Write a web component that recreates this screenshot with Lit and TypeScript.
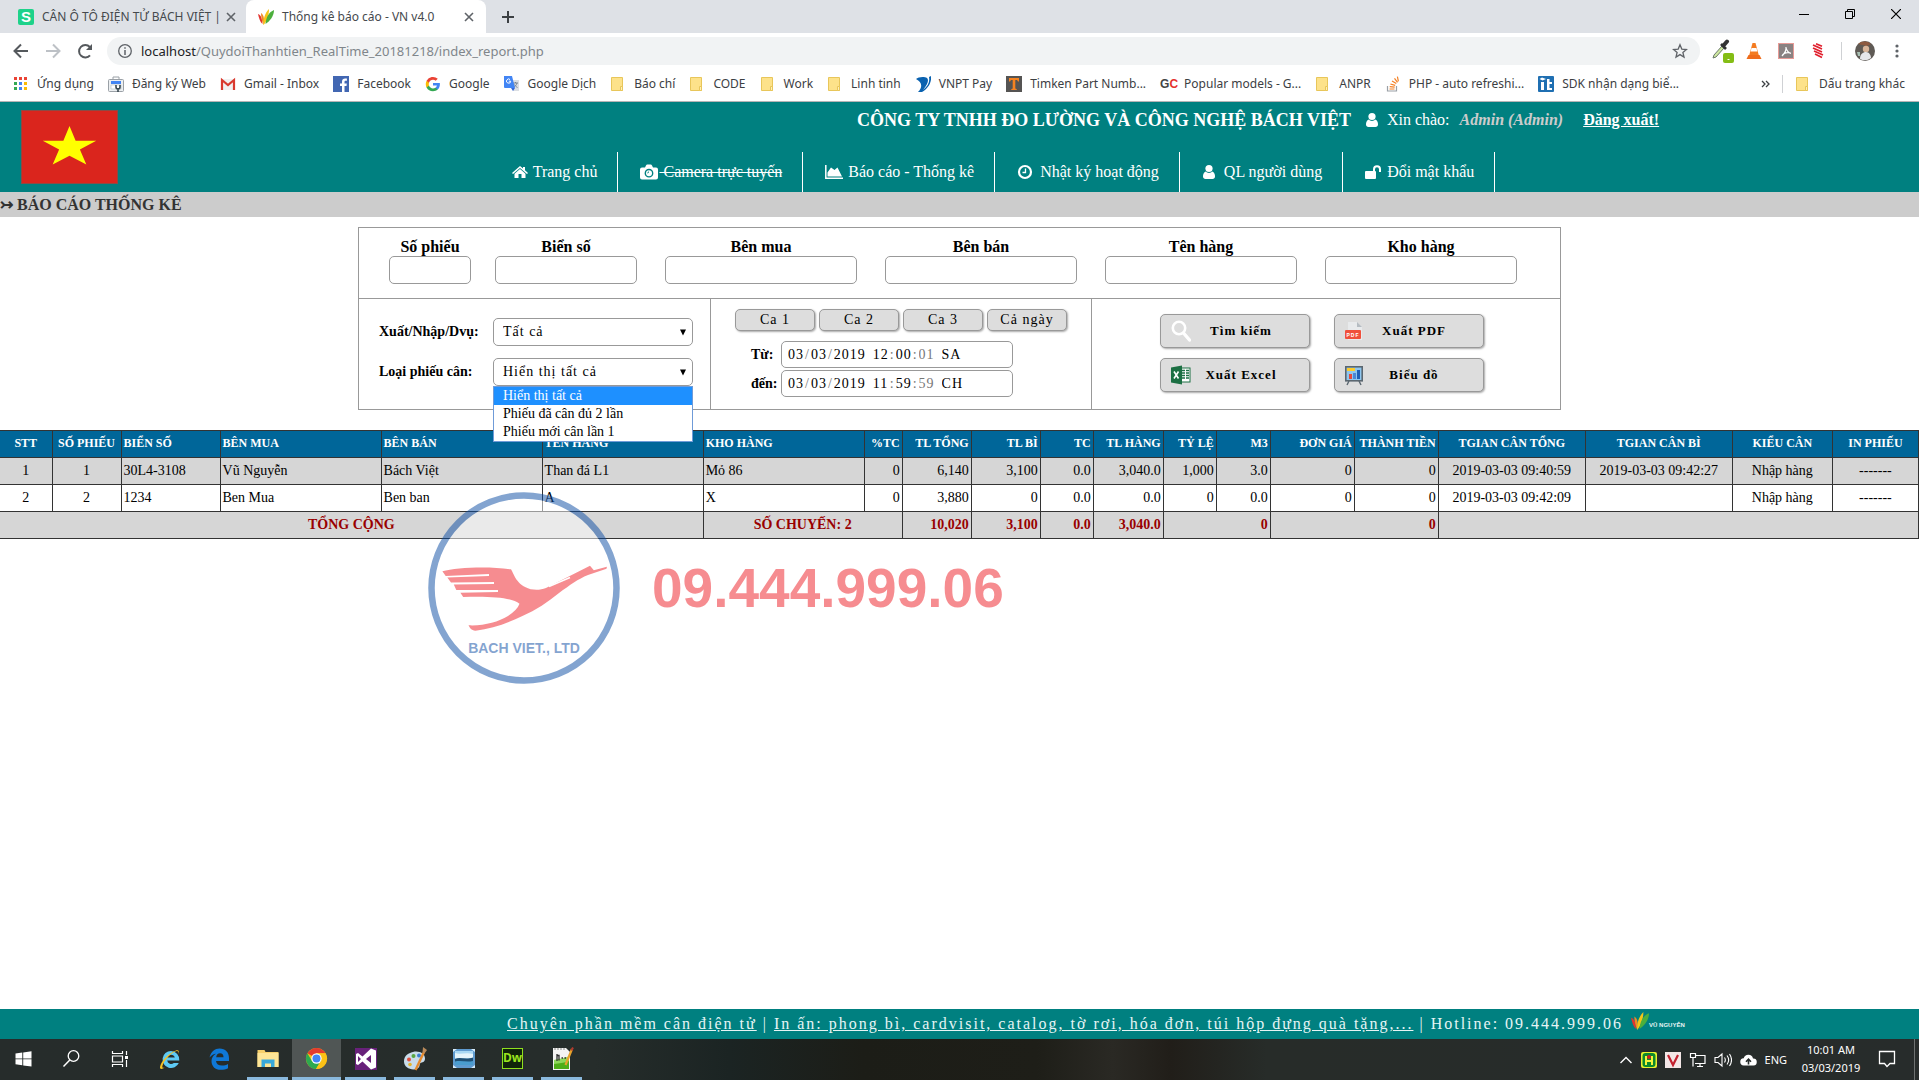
import { LitElement, html, css, svg, nothing } from "lit";
import { customElement, state } from "lit/decorators.js";
import { classMap } from "lit/directives/class-map.js";

const icon = (w: number, h: number, body: unknown, box = `0 0 ${w} ${h}`) =>
  html`<svg class="ic" width=${w} height=${h} viewBox=${box} aria-hidden="true">${body}</svg>`;

/* ---------- browser icons ---------- */
const folder = () => icon(16, 16, svg`<path d="M1.500 1.500h11v13h-11z" fill="#fde28a" stroke="#e8c65a"/><path d="M10.500 10.500h2v4h-2z" fill="#fff0b8" stroke="#e8c65a"/>`);
const brand = (s = 16) => icon(s, s, svg`
  <path d="M0 5c3 1 4 4 4.500 10C2 13 1 9 0 5z" fill="#e3342f"/>
  <path d="M3 4c3 2 3.500 6 2.500 12C4 12 3 8 3 4z" fill="#f08a24"/>
  <path d="M11 0c0 6-2 12-5.500 16C5 10 7 4 11 0z" fill="#f5c518"/>
  <path d="M16 1c0 6-4 11-8.500 14C8 8 11 3 16 1z" fill="#4caf3d"/>`, "0 0 16 16");

const googleG = svg`
  <path d="M14.900 8.200c0-.5 0-.9-.1-1.300H8v2.600h3.900a3.300 3.300 0 0 1-1.400 2.200v1.800h2.300c1.300-1.300 2.100-3.100 2.100-5.300z" fill="#4285f4"/>
  <path d="M8 15.200c1.900 0 3.500-.6 4.700-1.700l-2.300-1.800c-.6.4-1.400.7-2.400.7-1.900 0-3.400-1.200-4-2.900H1.600v1.900A7.200 7.200 0 0 0 8 15.200z" fill="#34a853"/>
  <path d="M4 9.500a4.300 4.300 0 0 1 0-2.800V4.800H1.600a7.200 7.200 0 0 0 0 6.600z" fill="#fbbc05"/>
  <path d="M8 3.700c1 0 2 .4 2.700 1.100l2.100-2A7.200 7.200 0 0 0 1.600 4.800L4 6.700c.6-1.700 2.100-3 4-3z" fill="#ea4335"/>`;

const appsIcon = () => icon(16, 16, svg`${[0, 1, 2].map((r) => [0, 1, 2].map((c) => svg`
  <rect x=${1 + c * 5} y=${1 + r * 5} width="3" height="3" fill=${[["#ea4335", "#ea4335", "#ea4335"], ["#34a853", "#4285f4", "#fbbc05"], ["#34a853", "#4285f4", "#fbbc05"]][r][c]}/>`))}`);

const bookmarks: { label: string; glyph: () => unknown }[] = [
  { label: "Ứng dụng", glyph: appsIcon },
  { label: "Đăng ký Web", glyph: () => icon(16, 16, svg`<path d="M5 3V1h6v2" fill="none" stroke="#9aa0a6"/><rect x=".5" y="3.500" width="15" height="12" rx="1" fill="#eceff1" stroke="#9aa0a6"/><path d="M3 5h10v3H3z" fill="#4285f4"/><path d="M3 9h10v4H3z" fill="#fff" stroke="#b0bec5" stroke-width=".6"/><path d="M8 9v2a2 2 0 0 0 4 0V9M10 12v4" fill="none" stroke="#37474f" stroke-width="1.600"/>`) },
  { label: "Gmail - Inbox", glyph: () => icon(16, 16, svg`<path d="M1 3h14v11H1z" fill="#f1f1f1"/><path d="M2 14V4l6 5 6-5v10" fill="none" stroke="#d93a2f" stroke-width="2.200"/>`) },
  { label: "Facebook", glyph: () => icon(16, 16, svg`<rect width="16" height="16" fill="#4267b2"/><path d="M11.500 16v-6h2l.3-2.500h-2.300V6c0-.8.3-1.200 1.300-1.200h1.100V2.600C13.600 2.500 13 2.500 12.200 2.500c-2 0-3.200 1.200-3.200 3.200v1.800H7V10h2v6z" fill="#fff"/>`) },
  { label: "Google", glyph: () => icon(16, 16, googleG) },
  { label: "Google Dịch", glyph: () => icon(16, 16, svg`<path d="M6 4h9v11H9z" fill="#dcdfe3"/><path d="M9 7h5M11.500 6v1M13 7c-.5 2-2 3.500-3.500 4.500M10.500 8.500c.5 1.200 1.700 2.300 3 3" stroke="#6f7d8c" fill="none" stroke-width=".9"/><path d="M0 0h8l3 12H1a1 1 0 0 1-1-1z" fill="#4285f4"/><path d="M6.800 5.200H4.800M6.700 5.300A2.100 2.100 0 1 1 6 3.500" stroke="#fff" fill="none"/><path d="M7 12h4l-2 3z" fill="#3367d6"/>`) },
  { label: "Báo chí", glyph: folder },
  { label: "CODE", glyph: folder },
  { label: "Work", glyph: folder },
  { label: "Linh tinh", glyph: folder },
  { label: "VNPT Pay", glyph: () => icon(16, 16, svg`<path d="M1 3c2-2 8-3 11-1 2 2 1 6-4 12 5-4 7-8 6-13l2-1c1 6-3 13-9 16H3C8 11 7 6 1 3z" fill="#0a62b0"/>`) },
  { label: "Timken Part Numb...", glyph: () => icon(16, 16, svg`<rect width="16" height="16" fill="#555453"/><path d="M3 2h10v3.500h-1L11 4H9.300v8.500l1.500.7V14H5.200v-.8l1.500-.7V4H5L4 5.500H3z" fill="#f58220"/>`) },
  { label: "Popular models - G...", glyph: () => html`<span class="gc">G<b>C</b></span>` },
  { label: "ANPR", glyph: folder },
  { label: "PHP - auto refreshi...", glyph: () => icon(16, 16, svg`<path d="M2.500 10v5h9v-5" fill="none" stroke="#9aa0a6" stroke-width="1.200"/><path d="M4.500 13h5M4.700 10.700l5 .5M5.400 8l4.800 1.400M7 5l4.300 2.600M9.500 2.300l3 4M12.400.6l1 4.800" stroke="#f48024" stroke-width="1.200"/>`) },
  { label: "SDK nhận dạng biể...", glyph: () => icon(16, 16, svg`<rect width="16" height="16" rx="1" fill="#1f6fb2"/><path d="M3 6h3v8H3zM9 3h2.500v3H14v2h-2.500v4H14v2H9z" fill="#fff"/><path d="M1.500 3L4 1.500 8 3 4.500 4.500z" fill="#fff"/>`) },
];

/* ---------- site icons ---------- */
const home = () => icon(16, 16, svg`<path d="M8 2L0 9l1 1 7-6 7 6 1-1-3-2.700V3h-2v1.600z" fill="#fff"/><path d="M8 5L2.500 9.700V14h4v-4h3v4h4V9.700z" fill="#fff"/>`);
const camera = () => icon(18, 16, svg`<path fill-rule="evenodd" d="M2 3.500h3L6 1.500C6.300.800 6.700.500 7.300.500h3.400c.6 0 1 .3 1.300 1l1 2h3a2 2 0 0 1 2 2v8a2 2 0 0 1-2 2H2a2 2 0 0 1-2-2v-8a2 2 0 0 1 2-2zm7 1.300a4.400 4.400 0 1 0 0 8.800 4.400 4.400 0 0 0 0-8.800z" fill="#fff"/><circle cx="9" cy="9.200" r="3" fill="#fff"/><path d="M7.700 9.300A1.400 1.400 0 0 1 9 7.900" stroke="#008080" fill="none"/>`);
const area = () => icon(18, 16, svg`<path d="M.8 1v13.300H18" fill="none" stroke="#fff" stroke-width="1.500"/><path d="M2.500 12.500V8.500l3.500-5L9.500 6l3-2.500L17 12.500z" fill="#fff"/>`);
const clock = () => icon(18, 16, svg`<circle cx="8" cy="8" r="6" fill="none" stroke="#fff" stroke-width="2.200"/><path d="M8.500 4.500v4H5.500" fill="none" stroke="#fff" stroke-width="1.300"/>`);
const person = (w = 14) => icon(w, 16, svg`<circle cx="7" cy="4.500" r="3.600" fill="#fff"/><path d="M3.500 7.500C1.500 8.500 1 10.500 1 12.500 1 14 2 15 3.500 15h7c1.500 0 2.500-1 2.500-2.500 0-2-.5-4-2.500-5a5 5 0 0 1-7 0z" fill="#fff"/>`);
const unlock = () => icon(17, 16, svg`<path d="M9 8V5.300a3 3 0 0 1 6 0V8" fill="none" stroke="#fff" stroke-width="2"/><rect x="0" y="7" width="11" height="8" rx="1" fill="#fff"/>`);

const navItems = [
  { label: "Trang chủ", glyph: home },
  { label: "Camera trực tuyến", glyph: camera, off: true },
  { label: "Báo cáo - Thống kê", glyph: area },
  { label: "Nhật ký hoạt động", glyph: clock },
  { label: "QL người dùng", glyph: () => person(17) },
  { label: "Đổi mật khẩu", glyph: unlock },
];

const searchIcon = () => icon(20, 22, svg`<circle cx="8" cy="8" r="6.200" fill="none" stroke="#fff" stroke-width="2.600"/><path d="M12.500 13l6 7" stroke="#fff" stroke-width="3.400" stroke-linecap="round"/>`);
const pdfIcon = () => icon(18, 22, svg`<path d="M3 2h9l5 5v13H3z" fill="#e8eaec"/><path d="M12 2l5 5h-5z" fill="#b5bcc2"/><rect x="0" y="10" width="16" height="9" rx="1" fill="#f0503c"/><text x="8" y="17" text-anchor="middle" class="tiny">PDF</text>`);
const excelIcon = () => icon(20, 22, svg`<rect x="9" y="4" width="10" height="14" fill="#fff" stroke="#1d7044"/><path d="M11 6.500h3M15 6.500h3M11 9h3M15 9h3M11 11.500h3M15 11.500h3M11 14h3M15 14h3" stroke="#1d7044" stroke-width="1.400"/><path d="M0 3.500L11 1.500v19L0 18.500z" fill="#1d7044"/><path d="M3 7.500l4.500 7M7.500 7.500L3 14.500" stroke="#fff" stroke-width="1.600"/>`);
const chartIcon = () => icon(18, 22, svg`<path d="M4 17l-2 4M14 17l2 4" stroke="#5b6770" stroke-width="1.400"/><rect x=".8" y="2.800" width="16.400" height="14" fill="#8fc7ef" stroke="#5b6770" stroke-width="1.600"/><path d="M2 4h8v3H2z" fill="#fccc2e"/><path d="M4 10h3v5H4z" fill="#e5493a"/><path d="M8 9h3v6H8z" fill="#4b87d6"/><path d="M12 6h3v9h-3z" fill="#1f5fb5"/>`);

/* ---------- taskbar icons ---------- */
const taskIcons: { name: string; glyph: () => unknown; slim?: boolean; open?: boolean; active?: boolean }[] = [
  { name: "Start", slim: true, glyph: () => icon(24, 24, svg`<path d="M3.500 6.500L10.300 5.500v6H3.500zM11.200 5.400L19.500 4.200v7.300h-8.300zM3.500 12.300h6.800v6L3.500 17.300zM11.200 12.300H19.500v7.300l-8.300-1.200z" fill="#fff"/>`) },
  { name: "Search", slim: true, glyph: () => icon(24, 24, svg`<circle cx="13.500" cy="9" r="5.300" fill="none" stroke="#fff" stroke-width="1.300"/><path d="M9.800 13L3.500 19.500" stroke="#fff" stroke-width="1.500"/>`) },
  { name: "Task view", glyph: () => icon(24, 24, svg`<path d="M3.500 4v2.500h10V4M3.500 20v-2.500h10V20M3.500 9h10v6h-10zM17.500 4v4M17.500 13v7" fill="none" stroke="#fff" stroke-width="1.200"/><path d="M16 9h3v3h-3z" fill="#fff"/>`) },
  { name: "Internet Explorer", glyph: () => icon(24, 24, svg`<path fill-rule="evenodd" d="M13 4a8.500 8.500 0 1 0 7.800 12h-5a4 4 0 0 1-6.600-2.500H21.300A8.600 8.600 0 0 0 13 4zm-3.700 6.500a3.900 3.900 0 0 1 7.500 0z" fill="#5ecbf5"/><path d="M20.500 7c1-3 0-4.500-3-3.300C11 6 3 14 2 20c-.3 2.500 2 2.500 5 .5-2 .7-3 .3-2.600-1.500C5.500 14 13 5.500 18 4.200c2-.5 2.800.5 2.500 2.800z" fill="#f7c325"/>`) },
  { name: "Edge", glyph: () => icon(22, 24, svg`<path d="M2.500 10.500C4 4.500 8 1.500 12.500 1.500c6 0 9.500 4 9.500 9.500v3H9c.3 3 2.500 4.500 6 4.500 2.300 0 4.300-.6 6-1.600v4.300c-2 1-4.500 1.600-7 1.600-6 0-9.500-3.500-9.500-8.800 0-3.300 1.800-6 4.500-7.300C7 6.800 4.500 8 2.500 10.500zM9.200 10.200h7.300c0-2.500-1.200-3.900-3.500-3.900-2.200 0-3.500 1.500-3.800 3.900z" fill="#0f78d7" fill-rule="evenodd"/>`, "1 0 22 24") },
  { name: "File Explorer", open: true, glyph: () => icon(24, 24, svg`<path d="M1.500 3h7l1 2h13v15h-21z" fill="#f5cf6b"/><path d="M1.500 6h21v14h-21z" fill="#fde596"/><path d="M5.500 20v-7.500h13V20h-3.500v-3.500h-6V20z" fill="#39a9db"/>`) },
  { name: "Chrome", open: true, active: true, glyph: () => icon(23, 23, svg`<circle cx="12" cy="12" r="11" fill="#fbc116"/><path d="M12 12L2.500 6.500A11 11 0 0 1 21.500 6.500H12z" fill="#e33b2e"/><path d="M2.500 6.500A11 11 0 0 0 11.500 23l5-8.500L12 12 7.500 15z" fill="#2da94f"/><path d="M12 6.500h9.500a11 11 0 0 1-10 16.500l5-8.500z" fill="#fbc116"/><circle cx="12" cy="12" r="5.400" fill="#fff"/><circle cx="12" cy="12" r="4.200" fill="#4285f4"/>`, "0 0 24 24") },
  { name: "Visual Studio", open: true, glyph: () => icon(22, 22, svg`<path d="M1 1h22v22H1z" fill="#68217a"/><path d="M17 1.500l5 2v17l-5 2-8.500-8L4 18l-2-1V7l2-1 4.500 3.500zM17 8l-5 4 5 4zM4 9v6l3-3z" fill="#fff" fill-rule="evenodd"/>`, "1 1 22 22") },
  { name: "Paint", open: true, glyph: () => icon(24, 24, svg`<path d="M10 5c6-1.500 12 1.500 12 6.500 0 4-3 3.500-4.500 4.500s0 4-3 5.500C9 24 1 21 1 14.500 1 9 5 6 10 5z" fill="#c9dcea"/><circle cx="6" cy="12.500" r="2" fill="#e0503f"/><circle cx="10.500" cy="9" r="2" fill="#58a742"/><circle cx="16" cy="8.500" r="2" fill="#3c7fd0"/><circle cx="7" cy="17.500" r="1.800" fill="#e5b52c"/><path d="M12.500 23L21 5" stroke="#e58a2d" stroke-width="2.400"/><path d="M19.500 5.500L20 0l4 3-2.500 3.500z" fill="#b98a5a"/>`) },
  { name: "Photos", open: true, glyph: () => icon(24, 24, svg`<path d="M1 2h22v19H1z" fill="#5f9bd0"/><path d="M3 4h18v14H3z" fill="#a9d8f3"/><path d="M3 6c5 2 11-1 18 1v4H3z" fill="#e4f4fb"/><path d="M3 12c5-2.500 10 1 18-1.500V18H3z" fill="#1f4f73"/><path d="M3 14.500c6-1.500 11 1 18-.5v4H3z" fill="#4a9dcf"/><path d="M1 18l4 3H1zM23 18l-4 3h4zM1 5l4-3H1zM23 5l-4-3h4z" fill="#d7ecfa"/>`) },
  { name: "Dreamweaver", open: true, glyph: () => html`<span class="dw">Dw</span>` },
  { name: "Notepad++", open: true, glyph: () => icon(24, 24, svg`<path d="M3 1h13l4 4v18H3z" fill="#f4f4f2"/><path d="M4 13c5-2 10-1 15-4v13H4z" fill="#8fd85a"/><path d="M4 17c5-1 10-1 15-3v8H4z" fill="#4fae18"/><path d="M5 1v2M8 1v2M11 1v2M14 1v2" stroke="#8b8b8b"/><path d="M7 7v7M7 8.500h2v5M11.500 11h1.500M14.500 11h1.500" stroke="#2d2d2d" stroke-width="1.300" fill="none"/><path d="M15.500 18L22 2" stroke="#e8a22b" stroke-width="2.200"/><path d="M21.500 3.500L23 .5" stroke="#b23a2e" stroke-width="2"/>`) },
];

/* ---------- report data ---------- */
const columns: { label: string; w: number; align: "l" | "c" | "r" }[] = [
  { label: "STT", w: 52, align: "c" },
  { label: "SỐ PHIẾU", w: 69, align: "c" },
  { label: "BIỂN SỐ", w: 99, align: "l" },
  { label: "BÊN MUA", w: 161, align: "l" },
  { label: "BÊN BÁN", w: 161, align: "l" },
  { label: "TÊN HÀNG", w: 161, align: "l" },
  { label: "KHO HÀNG", w: 161, align: "l" },
  { label: "%TC", w: 38, align: "r" },
  { label: "TL TỔNG", w: 69, align: "r" },
  { label: "TL BÌ", w: 69, align: "r" },
  { label: "TC", w: 53, align: "r" },
  { label: "TL HÀNG", w: 70, align: "r" },
  { label: "TỶ LỆ", w: 53, align: "r" },
  { label: "M3", w: 54, align: "r" },
  { label: "ĐƠN GIÁ", w: 84, align: "r" },
  { label: "THÀNH TIỀN", w: 84, align: "r" },
  { label: "TGIAN CÂN TỔNG", w: 147, align: "c" },
  { label: "TGIAN CÂN BÌ", w: 147, align: "c" },
  { label: "KIỂU CÂN", w: 100, align: "c" },
  { label: "IN PHIẾU", w: 86, align: "c" },
];
const rows = [
  ["1", "1", "30L4-3108", "Vũ Nguyễn", "Bách Việt", "Than đá L1", "Mỏ 86", "0", "6,140", "3,100", "0.0", "3,040.0", "1,000", "3.0", "0", "0", "2019-03-03 09:40:59", "2019-03-03 09:42:27", "Nhập hàng", "-------"],
  ["2", "2", "1234", "Ben Mua", "Ben ban", "A", "X", "0", "3,880", "0", "0.0", "0.0", "0", "0.0", "0", "0", "2019-03-03 09:42:09", "", "Nhập hàng", "-------"],
];

@customElement("browser-chrome")
class BrowserChrome extends LitElement {
  static styles = css`
    :host { display: block; font: 12px/16px "Noto Sans", "Open Sans", sans-serif; color: #3c4043; background: #fff; border-bottom: 1px solid #b6b4b6; }
    * { box-sizing: border-box; }
    button { border: 0; background: none; padding: 0; margin: 0; font: inherit; color: inherit; display: grid; place-items: center; }
    .ic { display: block; flex: none; }
    .strip { display: flex; height: 33px; background: #dee1e6; align-items: stretch; }
    .tab { display: flex; align-items: center; padding: 0 10px 0 18px; width: 246px; }
    .tab .name { flex: 1; padding-left: 8px; white-space: nowrap; color: #45494d; }
    .tab.active { background: #fff; border-radius: 8px 8px 0 0; padding: 0 12px 0 12px; width: 240px; }
    .plus { width: 44px; }
    .win { margin-left: auto; display: flex; height: 28px; }
    .win button { width: 46px; }
    .bar { display: flex; align-items: center; height: 36px; padding: 0 12px 0 11px; gap: 12px; }
    .nav { display: flex; gap: 12px; }
    .nav button { width: 20px; height: 20px; }
    .omni { flex: 1; display: flex; align-items: center; gap: 9px; height: 28px; border-radius: 14px; background: #f1f3f4; padding: 0 12px 0 11px; }
    .url { flex: 1; color: #80868b; font-size: 13px; }
    .url b { font-weight: 400; color: #202124; }
    .ext { display: flex; align-items: center; gap: 12px; }
    .ext button { width: 20px; height: 24px; }
    .sep { width: 1px; height: 18px; margin: 0 1px; background: #cfd1d4; }
    .marks { display: flex; align-items: center; height: 32px; padding: 0 14px 3px 13px; gap: 14px; }
    .marks a { display: flex; align-items: center; gap: 8px; color: inherit; text-decoration: none; white-space: nowrap; }
    .rest { margin-left: auto; display: flex; align-items: center; gap: 11px; }
    .gc { width: 16px; font: bold 12px/16px "Liberation Sans", sans-serif; color: #444; }
    .gc b { color: #e5322d; }
    .s { width: 16px; height: 16px; border-radius: 2px; background: #1ed28a; color: #fff; font: bold 15px/16px "Liberation Sans", sans-serif; text-align: center; }
  `;
  render() {
    const close = () => icon(10, 10, svg`<path d="M1 1l8 8M9 1L1 9" stroke="#5f6368" stroke-width="1.600"/>`);
    return html`
      <div class="strip">
        <div class="tab"><span class="s">S</span><span class="name">CÂN Ô TÔ ĐIỆN TỬ BÁCH VIỆT |</span><button aria-label="Đóng thẻ">${close()}</button></div>
        <div class="tab active">${brand()}<span class="name">Thống kê báo cáo - VN v4.0</span><button aria-label="Đóng thẻ">${close()}</button></div>
        <button class="plus" aria-label="Thẻ mới">${icon(12, 12, svg`<path d="M6 0v12M0 6h12" stroke="#3c4043" stroke-width="2"/>`)}</button>
        <div class="win">
          <button aria-label="Thu nhỏ">${icon(10, 10, svg`<path d="M0 5.500h10" stroke="#000"/>`)}</button>
          <button aria-label="Khôi phục">${icon(10, 10, svg`<path d="M.5 2.500h7v7h-7zM2.500 2.500v-2h7v7h-2" fill="none" stroke="#000"/>`)}</button>
          <button aria-label="Đóng">${icon(10, 10, svg`<path d="M0 0l10 10M10 0L0 10" stroke="#000" stroke-width="1.200"/>`)}</button>
        </div>
      </div>
      <div class="bar">
        <div class="nav">
          <button aria-label="Quay lại">${icon(16, 16, svg`<path d="M15 8H2M8 1.500L1.500 8 8 14.500" fill="none" stroke="#55595d" stroke-width="2"/>`)}</button>
          <button aria-label="Tiến">${icon(16, 16, svg`<path d="M1 8h13M8 1.500L14.500 8 8 14.500" fill="none" stroke="#bdc1c6" stroke-width="2"/>`)}</button>
          <button aria-label="Tải lại">${icon(16, 16, svg`<path d="M13 12.300A6.200 6.200 0 1 1 12.800 4" fill="none" stroke="#55595d" stroke-width="2"/><path d="M15 1v6H9z" fill="#55595d"/>`)}</button>
        </div>
        <div class="omni">
          ${icon(14, 14, svg`<circle cx="7" cy="7" r="6.300" fill="none" stroke="#5f6368" stroke-width="1.300"/><path d="M7 6v5M7 3.200v1.600" stroke="#5f6368" stroke-width="1.500"/>`)}
          <span class="url"><b>localhost</b>/QuydoiThanhtien_RealTime_20181218/index_report.php</span>
          <button aria-label="Đánh dấu">${icon(16, 16, svg`<path d="M8 1.800l1.800 4.300 4.600.4-3.500 3 1.100 4.600L8 11.600l-4 2.500 1.100-4.600-3.500-3 4.600-.4z" fill="none" stroke="#5f6368" stroke-width="1.300"/>`)}</button>
        </div>
        <div class="ext">
          <button aria-label="ColorZilla">${icon(22, 24, svg`<path d="M2 16l8-9 2 2-8 9-3 1z" fill="#cfe8a0" stroke="#6c7a6c"/><path d="M9 5l5 5" stroke="#333" stroke-width="2.600"/><path d="M11.500 6.500l3.500-4" stroke="#333" stroke-width="4" stroke-linecap="round"/><rect x="11" y="14" width="11" height="10" rx="2" fill="#84bd15"/><path d="M15.500 20.500h2" stroke="#fff"/>`)}</button>
          <button aria-label="VLC">${icon(16, 18, svg`<path d="M6.500 1h3L13 14H3z" fill="#f47b20"/><path d="M5.500 6h5l.8 3.500H4.600z" fill="#fff"/><path d="M2.500 13h11l2 4H.5z" fill="#ef6c1a"/>`)}</button>
          <button aria-label="Acrobat">${icon(16, 16, svg`<rect x=".5" y=".5" width="15" height="15" fill="#8a8282" stroke="#e79a96"/><path d="M4 13c3-3 4.500-6 4-9M4 13c1.500-3 5-4 9-3M8 5c1 3 3 5 5 5.500" stroke="#fff" fill="none" stroke-width="1.200"/>`)}</button>
          <button aria-label="Tiện ích">${icon(12, 16, svg`<path d="M1 2l9 4M1 5l9 4M2 8l9 4M3 11l7 3.500M4 .8l6 2.500" stroke="#e0202e" stroke-width="1.700"/>`)}</button>
          <span class="sep"></span>
          <button aria-label="Hồ sơ">${icon(20, 20, svg`<circle cx="10" cy="10" r="10" fill="#5f5a55"/><path d="M3 3a10 10 0 0 1 13 0l-4 2z" fill="#8d5a40"/><circle cx="11" cy="8" r="3.200" fill="#d9b59a"/><path d="M5 18c0-5 3-7 6-7s5 3 5 6a10 10 0 0 1-11 1z" fill="#e6e6ea"/><path d="M2 11h3v4H3z" fill="#a8c0b4"/>`)}</button>
          <button aria-label="Trình đơn">${icon(4, 16, svg`<circle cx="2" cy="3" r="1.600" fill="#5f6368"/><circle cx="2" cy="8" r="1.600" fill="#5f6368"/><circle cx="2" cy="13" r="1.600" fill="#5f6368"/>`)}</button>
        </div>
      </div>
      <nav class="marks">
        ${bookmarks.map((b) => html`<a href="#">${b.glyph()}<span>${b.label}</span></a>`)}
        <div class="rest">
          <button aria-label="Dấu trang khác">${icon(9, 8, svg`<path d="M1 1l3 3-3 3M5 1l3 3-3 3" fill="none" stroke="#3c4043" stroke-width="1.300"/>`)}</button>
          <span class="sep"></span>
          <a href="#">${folder()}<span>Dấu trang khác</span></a>
        </div>
      </nav>`;
  }
}

@customElement("site-header")
class SiteHeader extends LitElement {
  static styles = css`
    :host { display: block; font: 16px/20px "Liberation Serif", serif; color: #fff; }
    .ic { display: block; flex: none; }
    a { color: inherit; text-decoration: none; }
    .head { display: flex; background: #008080; height: 90px; }
    .flag { margin: 8px 0 0 21px; }
    .main { flex: 1; display: flex; flex-direction: column; justify-content: space-between; padding-left: 372px; }
    .top { display: flex; align-items: center; gap: 14px; padding: 7px 0 0 367px; }
    h1 { margin: 0; font-size: 18px; line-height: 22px; }
    .hello { display: flex; gap: 8px; align-items: center; }
    .who { font-weight: bold; font-style: italic; color: #ccc; padding: 0 12px 0 2px; }
    .out { font-weight: bold; text-decoration: underline; }
    .menu { display: flex; }
    .menu a { display: flex; align-items: center; gap: 1px; height: 40px; padding: 0 20px 0 22px; border-right: 1px solid #fff; white-space: pre; }
    .off span { text-decoration: line-through; }
    h2 { margin: 0; height: 25px; font-size: 16px; line-height: 25px; background: #ccc; color: #333; }
  `;
  render() {
    return html`
      <header class="head">
        <svg class="flag" width="97" height="74" viewBox="0 0 98 74" preserveAspectRatio="none" role="img" aria-label="Việt Nam">
          <rect x=".5" y=".5" width="97" height="73" fill="#da251d" stroke="#8c4a44"/>
          <path d="M49 16l6.200 14.700H76L59.500 39.500 66 54.500 49 45.700 32 54.500l6.500-15L22 30.700h20.800z" fill="#ff0"/>
        </svg>
        <div class="main">
          <div class="top">
            <h1>CÔNG TY TNHH ĐO LƯỜNG VÀ CÔNG NGHỆ BÁCH VIỆT</h1>
            <div class="hello">${person()}<span>Xin chào:</span><span class="who">Admin (Admin)</span><a class="out" href="#">Đăng xuất!</a></div>
          </div>
          <nav class="menu">${navItems.map((n) => html`<a href="#" class=${classMap({ off: !!n.off })}>${n.glyph()}<span>${" " + n.label}</span></a>`)}</nav>
        </div>
      </header>
      <h2>↣ BÁO CÁO THỐNG KÊ</h2>`;
  }
}

@customElement("filter-panel")
class FilterPanel extends LitElement {
  @state() private kind = "Hiển thị tất cả";
  @state() private open = true;
  private kinds = ["Hiển thị tất cả", "Phiếu đã cân đủ 2 lần", "Phiếu mới cân lần 1"];

  static styles = css`
    :host { display: block; max-width: 1203px; margin: 10px auto 0; font: 14px/18px "Liberation Serif", serif; color: #000; }
    * { box-sizing: border-box; }
    .ic { display: block; flex: none; }
    .panel { border: 1px solid #999; }
    .fields { display: flex; gap: 28px; height: 70px; padding: 9px 0 0 30px; }
    .pair { display: flex; gap: 24px; }
    .fields label { display: flex; flex-direction: column; align-items: center; font: bold 16px/19px "Liberation Serif", serif; }
    input, select, button { font: inherit; color: inherit; margin: 0; letter-spacing: 1px; }
    .fields input, select, .when { border: 1px solid #999; border-radius: 5px; background: #fff; }
    .fields input { height: 28px; width: 192px; padding: 0 8px; }
    .fields .w1 { width: 82px; }
    .fields .w2 { width: 142px; }
    .tools { display: grid; grid-template-columns: 351fr 381fr 469fr; border-top: 1px solid #999; height: 111px; }
    .tools > div + div { border-left: 1px solid #999; }
    .kinds { display: grid; grid-template-columns: 114px 200px; align-content: start; row-gap: 12px; padding: 19px 0 0 20px; align-items: center; }
    .kinds label, .range label { font-weight: bold; }
    .pick { position: relative; display: grid; grid-template-columns: 1fr 20px; align-items: center; }
    .pick select { grid-area: 1 / 1 / 2 / 3; width: 100%; height: 28px; padding: 0 10px 0 9px; appearance: none; }
    .pick .ic { grid-area: 1 / 2; pointer-events: none; justify-self: center; }
    .list { position: absolute; z-index: 5; top: 100%; left: 0; width: 100%; margin: 0; padding: 0; list-style: none; background: #fff; border: 1px solid #6f9bd8; }
    .list li { padding: 0 0 0 9px; line-height: 18px; }
    .list li.on { background: #1e90ff; color: #fff; }
    .shift { display: flex; flex-direction: column; gap: 10px; padding: 10px 0 0 24px; }
    .turns { display: flex; gap: 4px; }
    button { background: #ddd; border: 1px solid #999; border-radius: 5px; box-shadow: 1px 1px 2px #aaa; padding: 0; }
    .turns button { width: 80px; height: 22px; line-height: 18px; }
    .range { display: grid; grid-template-columns: 30px 232px; gap: 2px 0; justify-content: start; align-items: center; padding-left: 16px; }
    .when { display: flex; align-items: center; height: 27px; padding: 0 5px; color: #777; letter-spacing: 1px; }
    .when input { width: 18px; padding: 0 1px; border: 0; background: none; color: #000; }
    .when .yr { width: 34px; }
    .when .ap { width: 28px; }
    .when .sp { margin-left: 5px; }
    .when .sec { color: #777; }
    .acts { display: grid; grid-template-columns: 150px 150px; grid-auto-rows: 34px; gap: 10px 24px; justify-content: start; padding: 15px 0 0 68px; }
    .acts button { display: flex; align-items: center; padding: 0 18px 0 10px; font-weight: bold; font-size: 13px; }
    .acts span { flex: 1; text-align: center; }
    .tiny { font: bold 5px "Liberation Sans", sans-serif; fill: #fff; }
  `;

  private when(id: string, label: string, parts: string[]) {
    const [d, m, y, h, mi, s, ap] = parts;
    return html`<label for=${id}>${label}</label>
      <div class="when"><input id=${id} .value=${d}>/<input .value=${m} aria-label="Tháng">/<input class="yr" .value=${y} aria-label="Năm"><input class="sp" .value=${h} aria-label="Giờ">:<input .value=${mi} aria-label="Phút">:<input class="sec" .value=${s} aria-label="Giây"><input class="ap sp" .value=${ap} aria-label="Buổi"></div>`;
  }

  render() {
    const arrow = () => icon(6, 7, svg`<path d="M0 .5h6L3 6.500z" fill="#000"/>`);
    const field = (label: string, c = "") => html`<label>${label}<input type="text" class=${c}></label>`;
    return html`
      <form class="panel" @submit=${(e: Event) => e.preventDefault()}>
        <div class="fields">
          <div class="pair">${field("Số phiếu", "w1")}${field("Biển số", "w2")}</div>
          ${["Bên mua", "Bên bán", "Tên hàng", "Kho hàng"].map((l) => field(l))}
        </div>
        <div class="tools">
          <div class="kinds">
            <label for="flow">Xuất/Nhập/Dvụ:</label>
            <div class="pick"><select id="flow"><option>Tất cả</option></select>${arrow()}</div>
            <label for="kind">Loại phiếu cân:</label>
            <div class="pick">
              <select id="kind">${this.kinds.map((k) => html`<option ?selected=${k === this.kind}>${k}</option>`)}</select>${arrow()}
              ${this.open
                ? html`<ul class="list" role="listbox" aria-label="Loại phiếu cân">
                    ${this.kinds.map((k) => html`<li role="option" aria-selected=${k === this.kind} class=${classMap({ on: k === this.kind })} @click=${() => { this.kind = k; this.open = false; }}>${k}</li>`)}
                  </ul>`
                : nothing}
            </div>
          </div>
          <div class="shift">
            <div class="turns">${["Ca 1", "Ca 2", "Ca 3", "Cả ngày"].map((t) => html`<button type="button">${t}</button>`)}</div>
            <div class="range">
              ${this.when("from", "Từ:", ["03", "03", "2019", "12", "00", "01", "SA"])}
              ${this.when("to", "đến:", ["03", "03", "2019", "11", "59", "59", "CH"])}
            </div>
          </div>
          <div class="acts">
            <button type="submit">${searchIcon()}<span>Tìm kiếm</span></button>
            <button type="button">${pdfIcon()}<span>Xuất PDF</span></button>
            <button type="button">${excelIcon()}<span>Xuất Excel</span></button>
            <button type="button">${chartIcon()}<span>Biểu đồ</span></button>
          </div>
        </div>
      </form>`;
  }
}

@customElement("report-table")
class ReportTable extends LitElement {
  static styles = css`
    :host { display: block; margin-top: 20px; font: 14px/18px "Liberation Serif", serif; color: #000; }
    table { width: 100%; table-layout: fixed; border-collapse: collapse; }
    th, td { border: 1px solid #333; padding: 0 2px; height: 27px; box-sizing: border-box; white-space: nowrap; }
    tr > :first-child { border-left: 0; }
    th { background: #069; color: #fff; font-size: 12px; padding-bottom: 3px; }
    .l { text-align: left; }
    .c { text-align: center; }
    .r { text-align: right; }
    .odd { background: #d6d6d6; }
    .sum { background: #d6d6d6; color: #900; font-weight: bold; }
  `;
  render() {
    return html`
      <table>
        <colgroup>${columns.map((c) => html`<col style="width:${c.w}px">`)}</colgroup>
        <thead><tr>${columns.map((c) => html`<th class=${c.align}>${c.label}</th>`)}</tr></thead>
        <tbody>
          ${rows.map((r, i) => html`<tr class=${i % 2 ? "" : "odd"}>${r.map((v, j) => html`<td class=${columns[j].align}>${v}</td>`)}</tr>`)}
        </tbody>
        <tfoot>
          <tr class="sum">
            <td class="c" colspan="6">TỔNG CỘNG</td>
            <td class="c" colspan="2">SỐ CHUYẾN: 2</td>
            <td class="r">10,020</td><td class="r">3,100</td><td class="r">0.0</td><td class="r">3,040.0</td>
            <td class="r" colspan="2">0</td><td class="r" colspan="2">0</td><td colspan="4"></td>
          </tr>
        </tfoot>
      </table>`;
  }
}

@customElement("task-bar")
class TaskBar extends LitElement {
  static styles = css`
    :host { display: flex; height: 41px; color: #fff; font: 11px/18px "Noto Sans", "Open Sans", sans-serif; background: linear-gradient(90deg, #262c2b 0, #262d2b 31%, #1b2423 38%, #1c1d17 45%, #1e1e18 54%, #2a2924 58%, #211e19 61%, #272c29 66%, #272c2b 100%); }
    * { box-sizing: border-box; }
    .ic { display: block; }
    button { border: 0; background: none; color: inherit; padding: 0 0 2px; width: 49px; display: grid; place-items: center; position: relative; font: inherit; }
    button.slim { width: 48px; }
    button.open::after { content: ""; position: absolute; left: 4px; right: 4px; bottom: 0; height: 3px; background: #8ab9dd; }
    button.active { background: #505655; }
    button.active::after { left: 0; right: 0; }
    .dw { width: 21px; height: 21px; border: 1px solid #8fe01e; background: #10240a; color: #9ae61e; font: bold 12px/18px "Noto Sans", sans-serif; text-align: center; }
    .tray { margin-left: auto; display: flex; align-items: center; gap: 8px; padding-right: 4px; }
    .time { width: 72px; padding-bottom: 2px; text-align: center; }
    .note { width: 40px; height: 100%; border-right: 1px solid #6e7271; padding-right: 16px; }
  `;
  render() {
    return html`
      ${taskIcons.map((t) => html`<button aria-label=${t.name} class=${classMap({ slim: !!t.slim, open: !!t.open, active: !!t.active })}>${t.glyph()}</button>`)}
      <div class="tray">
        ${icon(14, 16, svg`<path d="M1.500 11L7 5.500 12.500 11" fill="none" stroke="#fff" stroke-width="1.400"/>`)}
        ${icon(16, 16, svg`<rect width="16" height="16" rx="2" fill="#e8f22e"/><rect x="1.500" y="1" width="13" height="14" rx="3" fill="#0c8a2c"/><path d="M5 4v9M11 4v9M5 9h6" stroke="#f4f43a" stroke-width="2"/><circle cx="8" cy="5" r="2" fill="#c22"/>`)}
        ${icon(16, 16, svg`<rect width="16" height="16" fill="#f3e6e6"/><path d="M3 3l5 10 5-10" fill="none" stroke="#c2202e" stroke-width="2.200"/>`)}
        ${icon(17, 16, svg`<path d="M6 3.500h10v8H6M8 14.500h6M11 11.500v3M1.500 1.500h5v4h-5zM4 5.500v9" fill="none" stroke="#fff" stroke-width="1.200"/>`)}
        ${icon(18, 16, svg`<path d="M1 5.500h3L8 2v12l-4-3.500H1zM10.500 5.500c1 1.500 1 3.500 0 5M13 3.500c2 2.700 2 6.300 0 9M15.500 2c2.500 3.700 2.500 8.300 0 12" fill="none" stroke="#fff" stroke-width="1.100"/>`)}
        ${icon(17, 16, svg`<path d="M4 13.500a3.600 3.600 0 0 1-.3-7.200A4.800 4.800 0 0 1 13 6.500a3.500 3.500 0 0 1 .5 7z" fill="#fff"/><path d="M8.500 12.500V7.500M6 9.700l2.500-2.500L11 9.700" stroke="#262c2b" stroke-width="1.600" fill="none"/>`)}
        <span>ENG</span>
        <div class="time">10:01 AM<br>03/03/2019</div>
        <button class="note" aria-label="Thông báo">${icon(18, 18, svg`<path d="M1.500 1.500h15v12H12L9 16.500l-2.500-3h-5z" fill="none" stroke="#fff" stroke-width="1.300"/>`)}</button>
      </div>`;
  }
}

@customElement("app-root")
class AppRoot extends LitElement {
  static styles = css`
    :host { display: flex; flex-direction: column; min-height: 100vh; background: #fff; font-family: "Liberation Serif", serif; }
    .ic { display: block; }
    main { flex: 1; position: relative; }
    .mark { position: absolute; left: 428px; top: 275px; opacity: 0.5; display: flex; align-items: center; gap: 32px; pointer-events: none; }
    .phone { font: bold 55px/64px "Liberation Sans", sans-serif; color: #ef1b23; }
    .ltd { font: bold 14px "Liberation Sans", sans-serif; fill: #094ba3; }
    footer { display: flex; align-items: center; height: 30px; padding-left: 507px; background: #008080; color: #e6f5f5; font-size: 16px; letter-spacing: 2px; white-space: pre; }
    footer a { color: inherit; }
    .logo { display: flex; align-items: flex-end; margin: 0 0 6px 8px; font: bold 6px/10px "Liberation Sans", sans-serif; letter-spacing: 0; }
  `;
  render() {
    return html`
      <browser-chrome></browser-chrome>
      <site-header></site-header>
      <main>
        <filter-panel></filter-panel>
        <report-table></report-table>
        <div class="mark">
          <svg width="192" height="192" viewBox="0 0 192 192" role="img" aria-label="Bach Viet">
            <circle cx="96" cy="96" r="92.500" fill="#fff" stroke="#094ba3" stroke-width="6.500"/>
            <path fill="#ef1b23" d="M14.400 79.300C28 75.500 60 74 83 77.300C86 82 88 93 102.600 97.300C108 98 113 98 118 96L162 73.700L165.800 78.300L178.900 74.700L178.500 76.700L160 83C150 87 142 93 131 101C120 110 108 118 94.400 124C80 131 64 137 47.500 138.700C43 138.500 42 136 40.500 133.300C56 134 70 130 80 124C86 120 90 116 91.500 111.700C84 106 66 104 35.200 105L32.400 100.700L70 100L70 98L28.300 98L25.800 92.500L66 92L66 90L23 90.500L19.300 85.500L61 84L61 82L17.700 84Z"/>
            <path d="M121 94.500L142 85.500" stroke="#fff" stroke-width="1.500"/>
            <text class="ltd" x="96" y="161" text-anchor="middle">BACH VIET., LTD</text>
          </svg>
          <span class="phone">09.444.999.06</span>
        </div>
      </main>
      <footer><a href="#">Chuyên phần mềm cân điện tử</a> | <a href="#">In ấn: phong bì, cardvisit, catalog, tờ rơi, hóa đơn, túi hộp đựng quà tặng,...</a> | Hotline: 09.444.999.06<span class="logo">${brand(18)}VŨ NGUYÊN</span></footer>
      <task-bar></task-bar>`;
  }
}
